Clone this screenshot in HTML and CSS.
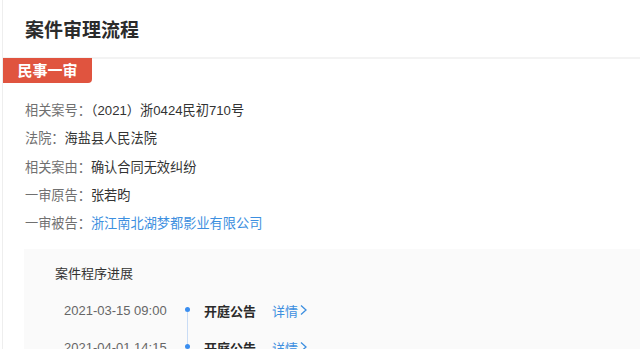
FILE: index.html
```html
<!DOCTYPE html>
<html>
<head>
  <meta charset="UTF-8"/>
  <title>案件审理流程</title>
  <link rel="stylesheet" href="styles.css">
</head>
<body>
  <div class="page">
    <div class="page-header">
      <h1>案件审理流程</h1>
    </div>

    <div class="stage-tag">民事一审</div>

    <div class="case-info">
      <div class="info-row"><span class="label">相关案号：</span><span class="value">（2021）浙0424民初710号</span></div>
      <div class="info-row"><span class="label">法院：</span><span class="value">海盐县人民法院</span></div>
      <div class="info-row"><span class="label">相关案由：</span><span class="value">确认合同无效纠纷</span></div>
      <div class="info-row"><span class="label">一审原告：</span><span class="value">张若昀</span></div>
      <div class="info-row"><span class="label">一审被告：</span><a class="value link" href="#">浙江南北湖梦都影业有限公司</a></div>
    </div>

    <div class="progress">
      <h2>案件程序进展</h2>
      <div class="timeline">
        <div class="step">
          <span class="step-time">2021-03-15 09:00</span>
          <span class="step-dot"></span>
          <span class="step-name">开庭公告</span>
          <a class="step-more" href="#">详情<svg width="9" height="12" viewBox="0 0 9 12"><path d="M2 1.5 L7 6 L2 10.5" fill="none" stroke="#3d8fe0" stroke-width="1.3"/></svg></a>
        </div>
        <div class="step">
          <span class="step-time">2021-04-01 14:15</span>
          <span class="step-dot"></span>
          <span class="step-name">开庭公告</span>
          <a class="step-more" href="#">详情<svg width="9" height="12" viewBox="0 0 9 12"><path d="M2 1.5 L7 6 L2 10.5" fill="none" stroke="#3d8fe0" stroke-width="1.3"/></svg></a>
        </div>
      </div>
    </div>
  </div>
</body>
</html>
```

FILE: styles.css
```css
html, body {
    margin: 0;
    height: 100%;
    background-color: #fff;
    font-family: "Liberation Sans", "Noto Sans CJK SC", sans-serif;
    overflow: hidden;
}
.page {
    margin-left: 2px;
    min-height: 100%;
    border-left: 1px solid #eeeeee;
}
.page-header {
    height: 57px;
    display: flex;
    align-items: center;
    padding-left: 22px;
    border-bottom: 2px solid #f3f3f3;
}
.page-header h1 {
    margin: 0;
    font-size: 19px;
    font-weight: bold;
    color: #2b2b2b;
}
.stage-tag {
    display: inline-block;
    width: 89px;
    height: 25px;
    line-height: 25px;
    margin-top: -1px;
    text-align: center;
    background-color: #e0543f;
    color: #fff;
    font-size: 15px;
    font-weight: bold;
    border-bottom-right-radius: 4px;
}
.case-info {
    padding: 14px 0 0 22px;
}
.info-row {
    font-size: 13.2px;
    line-height: 28.3px;
    color: #333;
}
.info-row .label {
    color: #707070;
}
.link {
    color: #3d8fe0;
    text-decoration: none;
}
.progress {
    margin: 11px 0 0 21px;
    padding: 16px 0 40px 31px;
    background-color: #fafafa;
}
.progress h2 {
    margin: 0;
    font-size: 13px;
    line-height: 18px;
    font-weight: normal;
    color: #333;
}
.timeline {
    margin-top: 17px;
    padding-left: 9px;
}
.step {
    display: flex;
    align-items: center;
    height: 20px;
    margin-bottom: 17px;
    font-size: 13px;
}
.step-time {
    width: 113px;
    color: #666;
}
.step-dot {
    position: relative;
    width: 20px;
    height: 20px;
    margin-right: 7px;
}
.step-dot::before {
    content: "";
    position: absolute;
    left: 8px;
    top: 7px;
    width: 5px;
    height: 5px;
    border-radius: 50%;
    background-color: #3a8ef0;
}
.step-dot::after {
    content: "";
    position: absolute;
    left: 10px;
    top: 12px;
    width: 1px;
    height: 32px;
    background-color: #c9dcf5;
}
.step-name {
    font-weight: bold;
    color: #2b2b2b;
    margin-right: 16px;
}
.step-more {
    display: flex;
    align-items: center;
    color: #3d8fe0;
    text-decoration: none;
}
.step-more svg {
    margin-left: 1px;
}
```
